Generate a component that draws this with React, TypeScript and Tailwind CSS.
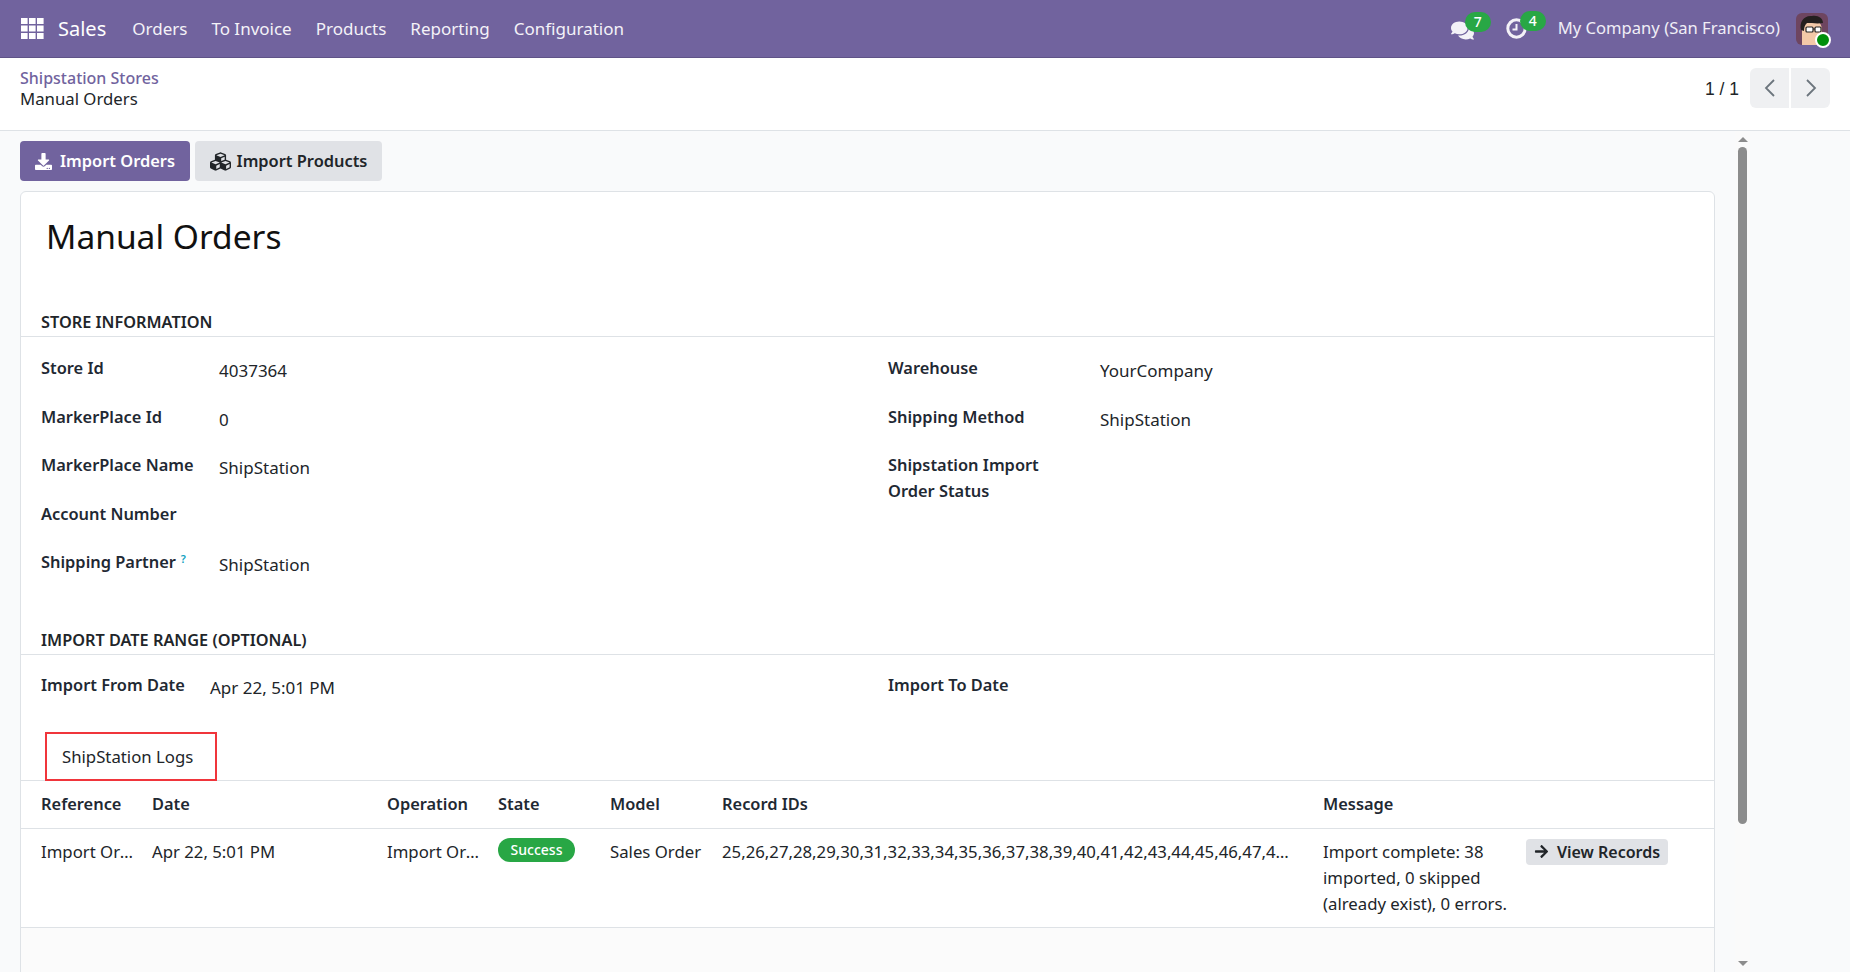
import { FaArrowRight, FaComments, FaCubes, FaDownload } from 'react-icons/fa';

const font = "font-['Noto_Sans',sans-serif]";

const menus = ['Orders', 'To Invoice', 'Products', 'Reporting', 'Configuration'];

function GridIcon() {
  return (
    <svg width="23" height="21" viewBox="0 0 23 21" fill="white">
      {[0, 8, 16].map((x) =>
        [0, 7.5, 15].map((y) => <rect key={`${x}-${y}`} x={x} y={y} width="6.6" height="6" />),
      )}
    </svg>
  );
}

function ClockIcon() {
  return (
    <svg width="21" height="21" viewBox="0 0 21 21" fill="none" stroke="#f3f1f7">
      <circle cx="10.5" cy="10.5" r="8.7" strokeWidth="3" />
      <path d="M10.5 6v5.5H6.5" strokeWidth="2" />
    </svg>
  );
}

function Avatar() {
  return (
    <div className="relative h-8 w-8">
      <svg width="32" height="32" viewBox="0 0 32 32" className="rounded-md">
        <rect width="32" height="32" fill="#6e4560" />
        <path d="M6 32V18c0-8 4-11 10-11s10 3 10 11v14z" fill="#f3c9a8" />
        <path d="M5 17C3 9 8 2 16 3c6-1 11 2 11 7-5 1-12 0-16 0-2 2-3 4-3 8z" fill="#24201f" />
        <rect x="10" y="14" width="7" height="5" rx="1" fill="#fff" stroke="#222" strokeWidth="1.2" />
        <rect x="19" y="14" width="6" height="5" rx="1" fill="#fff" stroke="#222" strokeWidth="1.2" />
        <path d="M17 16h2" stroke="#222" strokeWidth="1" />
      </svg>
      <span className="absolute -right-[3px] -bottom-[3px] h-4 w-4 rounded-full border-2 border-white bg-[#008f0b]" />
    </div>
  );
}

function Pill({ value }: { value: number }) {
  return (
    <span className="absolute -top-[7px] left-[14px] flex h-5 w-[26px] items-center justify-center rounded-full bg-[#28a745] text-[14px] leading-none font-medium text-white">
      {value}
    </span>
  );
}

function Navbar() {
  return (
    <header className="flex h-[58px] shrink-0 items-center border-b border-[#5f5387] bg-[#71639e] pr-[22px] pl-[21px] text-white">
      <GridIcon />
      <span className="ml-[14px] text-[20px]">Sales</span>
      <nav className="ml-[26px] flex gap-[24px] text-[17px] text-[#f4f2f8]">
        {menus.map((m) => (
          <span key={m}>{m}</span>
        ))}
      </nav>
      <div className="ml-auto flex items-center">
        <span className="relative h-[20px] w-[24px]">
          <FaComments size={23} className="text-[#f3f1f7]" />
          <Pill value={7} />
        </span>
        <span className="relative ml-[31px] h-[21px] w-[21px]">
          <ClockIcon />
          <Pill value={4} />
        </span>
        <span className="ml-[31px] text-[16.6px] text-[#f0eef6]">My Company (San Francisco)</span>
        <span className="ml-[16px]">
          <Avatar />
        </span>
      </div>
    </header>
  );
}

function ControlPanel() {
  return (
    <div className="flex h-[73px] shrink-0 border-b border-[#dee2e6] bg-white pr-[20px] pl-[20px]">
      <div className="pt-[10px]">
        <div className="text-[16px] leading-[21px] font-medium text-[#71639e]">Shipstation Stores</div>
        <div className="leading-[20px] text-[#212529]">Manual Orders</div>
      </div>
      <div className="ml-auto flex items-start pt-[10px]">
        <span className="mt-[8px] mr-[11px] font-['Liberation_Sans',sans-serif] text-[17.5px] text-[#212529]">1 / 1</span>
        <button className="flex h-10 w-[39px] items-center justify-center rounded-l-md bg-[#eff0f2]">
          <svg width="12" height="18" viewBox="0 0 12 18" fill="none" stroke="#6c757d" strokeWidth="1.8">
            <path d="M10 1L2 9l8 8" />
          </svg>
        </button>
        <button className="ml-[2px] flex h-10 w-[39px] items-center justify-center rounded-r-md bg-[#eff0f2]">
          <svg width="12" height="18" viewBox="0 0 12 18" fill="none" stroke="#6c757d" strokeWidth="1.8">
            <path d="M2 1l8 8-8 8" />
          </svg>
        </button>
      </div>
    </div>
  );
}

function Field({ label, value, labelW, help, children }: { label?: string; value?: string; labelW: string; help?: boolean; children?: React.ReactNode }) {
  return (
    <div className="flex min-h-[29px] items-start">
      <div className={`${labelW} shrink-0 text-[16.4px] leading-[26px] font-semibold text-[#1f2933]`}>
        {children ?? label}
        {help && <sup className="ml-[5px] text-[11px] font-semibold text-[#0f9fc0]">?</sup>}
      </div>
      {value && <div className="pt-[3px] text-[17px] leading-[26px] text-[#212529]">{value}</div>}
    </div>
  );
}

function Sheet() {
  return (
    <section className="mt-[10px] min-h-[800px] rounded-t-md border border-[#dee2e6] bg-white">
      <h1 className="pt-[15px] pl-[25px] text-[33.5px] leading-[58px] text-[#111]">Manual Orders</h1>

      <h2 className="mt-[45px] border-b border-[#dee2e6] pb-[2px] pl-[20px] text-[16.3px] leading-[24px] font-semibold text-[#212529]">
        STORE INFORMATION
      </h2>
      <div className="flex pt-[18px] pl-[20px]">
        <div className="flex w-[847px] flex-col gap-[19.5px]">
          <Field label="Store Id" value="4037364" labelW="w-[178px]" />
          <Field label="MarkerPlace Id" value="0" labelW="w-[178px]" />
          <Field label="MarkerPlace Name" value="ShipStation" labelW="w-[178px]" />
          <Field label="Account Number" labelW="w-[178px]" />
          <Field label="Shipping Partner" value="ShipStation" labelW="w-[178px]" help />
        </div>
        <div className="flex flex-col gap-[19.5px]">
          <Field label="Warehouse" value="YourCompany" labelW="w-[212px]" />
          <Field label="Shipping Method" value="ShipStation" labelW="w-[212px]" />
          <Field labelW="w-[212px]">
            Shipstation Import
            <br />
            Order Status
          </Field>
        </div>
      </div>

      <h2 className="mt-[50px] border-b border-[#dee2e6] pb-[2px] pl-[20px] text-[16.3px] leading-[24px] font-semibold text-[#212529]">
        IMPORT DATE RANGE (OPTIONAL)
      </h2>
      <div className="flex pt-[17px] pl-[20px]">
        <div className="w-[847px]">
          <Field label="Import From Date" value="Apr 22, 5:01 PM" labelW="w-[169px]" />
        </div>
        <Field label="Import To Date" labelW="w-[212px]" />
      </div>

      <div className="mt-[31px] border-b border-[#dee2e6] pl-[24px]">
        <div className="relative -mb-px flex h-[49px] w-[172px] items-center border-2 border-[#f0353b] pl-[15px] text-[16.75px] text-[#212529]">
          ShipStation Logs
        </div>
      </div>

      <table className="w-full table-fixed border-collapse text-[16.75px]">
        <colgroup>
          <col className="w-[131px]" />
          <col className="w-[235px]" />
          <col className="w-[111px]" />
          <col className="w-[112px]" />
          <col className="w-[112px]" />
          <col className="w-[601px]" />
          <col className="w-[203px]" />
          <col />
        </colgroup>
        <thead>
          <tr className="h-[47px] border-b border-[#dee2e6] text-left text-[16.4px] text-[#1f2933]">
            <th className="pl-[20px] font-semibold">Reference</th>
            <th className="font-semibold">Date</th>
            <th className="font-semibold">Operation</th>
            <th className="font-semibold">State</th>
            <th className="font-semibold">Model</th>
            <th className="font-semibold">Record IDs</th>
            <th className="font-semibold">Message</th>
            <th />
          </tr>
        </thead>
        <tbody>
          <tr className="h-[99px] border-b border-[#dee2e6] align-top text-[#212529]">
            <td className="truncate pt-[10px] pr-[15px] pl-[20px] leading-[26px]">Import Orders</td>
            <td className="pt-[10px] leading-[26px]">Apr 22, 5:01 PM</td>
            <td className="truncate pt-[10px] pr-[15px] leading-[26px]">Import Orders</td>
            <td className="pt-[9px]">
              <span className="flex h-[24px] w-[77px] items-center justify-center rounded-full bg-[#28a745] text-[14px] font-medium text-white">
                Success
              </span>
            </td>
            <td className="pt-[10px] leading-[26px]">Sales Order</td>
            <td className="truncate pt-[10px] pr-[27px] leading-[26px]">
              25,26,27,28,29,30,31,32,33,34,35,36,37,38,39,40,41,42,43,44,45,46,47,48,49,50
            </td>
            <td className="pt-[10px] leading-[26px]">
              Import complete: 38 imported, 0 skipped (already exist), 0 errors.
            </td>
            <td className="pt-[10px]">
              <button className="flex h-[26px] w-[142px] items-center justify-center gap-[8px] rounded bg-[#e0e2e6] text-[16px] font-semibold text-[#212529]">
                <FaArrowRight size={15} />
                View Records
              </button>
            </td>
          </tr>
        </tbody>
      </table>
      <div className="h-[200px] bg-[#fbfbfb]" />
    </section>
  );
}

function Scrollbar() {
  return (
    <div className="flex h-full w-[15px] shrink-0 flex-col items-center bg-[#fafafa]">
      <span className="mt-[6px] h-0 w-0 border-x-[5px] border-b-[5px] border-x-transparent border-b-[#8c8c8c]" />
      <span className="mt-[5px] h-[677px] w-[9px] rounded-full bg-[#8c8c8c]" />
      <span className="mt-auto mb-[6px] h-0 w-0 border-x-[5px] border-t-[5px] border-x-transparent border-t-[#8c8c8c]" />
    </div>
  );
}

export default function App() {
  return (
    <div className={`${font} flex h-screen flex-col overflow-hidden bg-[#f9fafb] text-[16.75px]`}>
      <Navbar />
      <ControlPanel />
      <div className="flex min-h-0 flex-1">
        <main className="ml-[20px] w-[1695px] shrink-0 overflow-hidden pt-[10px]">
          <div className="flex gap-[5px]">
            <button className="flex h-10 w-[170px] items-center justify-center gap-[8px] rounded bg-[#71639e] text-[16.4px] font-semibold text-white">
              <FaDownload size={17} />
              Import Orders
            </button>
            <button className="flex h-10 w-[187px] items-center justify-center gap-[6px] rounded bg-[#e0e2e6] text-[16.4px] font-semibold text-[#212529]">
              <FaCubes size={21} />
              Import Products
            </button>
          </div>
          <Sheet />
        </main>
        <div className="ml-[20px]">
          <Scrollbar />
        </div>
      </div>
    </div>
  );
}
